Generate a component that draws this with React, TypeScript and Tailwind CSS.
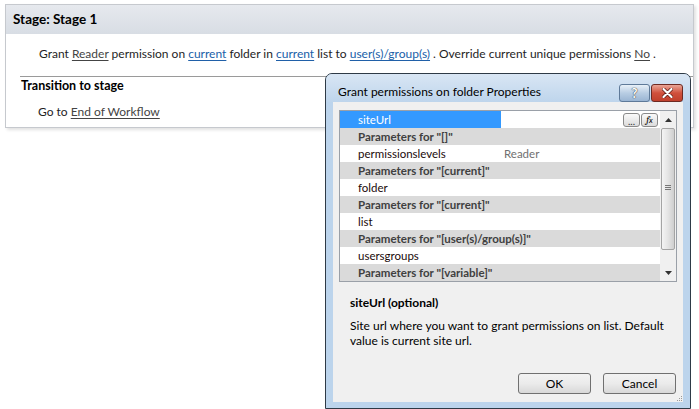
import React from "react";

const ui = { fontFamily: 'Lato, "Open Sans", Arial, sans-serif' };

type Row = { name: string; value?: string; header?: boolean; selected?: boolean };

const rows: Row[] = [
  { name: "siteUrl", selected: true },
  { name: 'Parameters for "[]"', header: true },
  { name: "permissionslevels", value: "Reader" },
  { name: 'Parameters for "[current]"', header: true },
  { name: "folder" },
  { name: 'Parameters for "[current]"', header: true },
  { name: "list" },
  { name: 'Parameters for "[user(s)/group(s)]"', header: true },
  { name: "usersgroups" },
  { name: 'Parameters for "[variable]"', header: true },
];

function StagePanel() {
  return (
    <div className="ml-[5px] mt-[4px] h-[124px] w-[689px] border border-[#c6c9ce] bg-white shadow-[2px_2px_3px_rgba(0,0,0,0.12)]">
      <div className="flex h-[29px] items-center bg-gradient-to-b from-[#e6e9ee] to-[#d8dde4] pl-[7px] text-[13.5px] font-bold text-black">
        Stage: Stage 1
      </div>
      <div className="whitespace-nowrap pl-[33px] pt-[11px] text-[12px] leading-[18px] text-[#1e1e1e]">
        Grant <span className="text-[#444] underline underline-offset-2">Reader</span> permission on{" "}
        <span className="text-[#2060a8] underline underline-offset-2">current</span> folder in{" "}
        <span className="text-[#2060a8] underline underline-offset-2">current</span> list to{" "}
        <span className="text-[#2060a8] underline underline-offset-2">user(s)/group(s)</span> . Override current unique
        permissions <span className="text-[#444] underline underline-offset-2">No</span> .
      </div>
      <div className="ml-[14px] mt-[13px] border-t border-[#9a9a9a] pl-[1px] pt-[1px] text-[12.5px] font-bold leading-[16px] text-black">
        Transition to stage
      </div>
      <div className="pl-[32px] pt-[9px] text-[12px] leading-[18px] text-[#1e1e1e]">
        Go to <span className="text-[#444] underline underline-offset-2">End of Workflow</span>
      </div>
    </div>
  );
}

function Arrow({ up }: { up?: boolean }) {
  return (
    <div className="flex h-[17px] w-[15px] items-center justify-center">
      <svg width="7" height="4" viewBox="0 0 7 4">
        {up ? <path d="M0 4 L3.5 0 L7 4 Z" fill="#333" /> : <path d="M0 0 L7 0 L3.5 4 Z" fill="#333" />}
      </svg>
    </div>
  );
}

function Grid() {
  return (
    <div className="ml-[6px] mt-[8px] flex h-[172px] w-[338px] border border-[#9aa0a8] bg-white">
      <div className="flex w-[320px] flex-col">
        {rows.map((r, i) =>
          r.header ? (
            <div
              key={i}
              className="flex h-[17px] items-center whitespace-nowrap bg-[#dadada] pl-[18px] text-[11.5px] font-bold text-[#404040]"
            >
              {r.name}
            </div>
          ) : (
            <div key={i} className="flex h-[17px] items-center bg-white text-[11.5px] text-[#1a0a0a]">
              <div
                className={`flex h-full w-[161px] items-center pl-[18px] ${r.selected ? "bg-[#3399ff] text-white" : ""}`}
              >
                {r.name}
              </div>
              {r.value && <div className="pl-[3px] text-[#707070]">{r.value}</div>}
              {r.selected && (
                <div className="ml-auto mr-[2px] flex gap-[1px]">
                  <div className="flex h-[14px] w-[17px] items-end justify-center rounded-[3px] border border-[#8a8a8a] bg-gradient-to-b from-[#fafafa] to-[#dcdcdc] text-[10px] leading-[10px] text-[#333]">
                    ...
                  </div>
                  <div className="flex h-[14px] w-[17px] items-center justify-center rounded-[3px] border border-[#8a8a8a] bg-gradient-to-b from-[#fafafa] to-[#dcdcdc] text-[10px] leading-none text-black">
                    <span className="font-serif italic">f</span>
                    <span className="text-[8px] italic">x</span>
                  </div>
                </div>
              )}
            </div>
          )
        )}
      </div>
      <div className="flex w-[16px] flex-col items-center bg-[#f0f0f0]">
        <Arrow up />
        <div className="h-[122px] w-[14px] rounded-[2px] border border-[#a4a4a4] bg-gradient-to-r from-[#f4f4f4] via-[#e4e4e4] to-[#cfcfcf]">
          <div className="mt-[56px] flex flex-col items-center gap-[1px]">
            <div className="h-px w-[6px] bg-[#777]" />
            <div className="h-px w-[6px] bg-[#777]" />
            <div className="h-px w-[6px] bg-[#777]" />
          </div>
        </div>
        <div className="flex-1" />
        <Arrow />
      </div>
    </div>
  );
}

function Dialog() {
  return (
    <div
      className="absolute left-[325px] top-[73px] flex h-[336px] w-[366px] flex-col rounded-t-[7px] border border-[#2e3a46] bg-[#bcd4ec] px-[7px] pb-[6px]"
      style={ui}
    >
      <div className="-mx-[7px] flex h-[28px] items-end rounded-t-[6px] bg-gradient-to-b from-[#d9e6f4] to-[#bed5ec] px-[7px]">
        <div className="pb-[2px] pl-[5px] text-[12px] leading-[16px] text-black">Grant permissions on folder Properties</div>
        <div className="mb-[-1px] ml-auto flex gap-[1px] self-center pt-[9px]">
          <div className="flex h-[18px] w-[31px] items-center justify-center rounded-[3px] border border-[#5f7a99] bg-gradient-to-b from-[#e8f0f8] via-[#b8cde3] to-[#9ab5d3] text-[13px] font-bold leading-none text-white [text-shadow:0_0_1px_#333,0_0_1px_#333]">
            ?
          </div>
          <div className="flex h-[18px] w-[32px] items-center justify-center rounded-[3px] border border-[#6e2a22] bg-gradient-to-b from-[#e8a496] via-[#d0503c] to-[#c0402c]">
            <svg width="11" height="10" viewBox="0 0 11 10">
              <path d="M1.5 1 L9.5 9 M9.5 1 L1.5 9" stroke="#5a1a12" strokeWidth="3.6" strokeLinecap="round" />
              <path d="M1.5 1 L9.5 9 M9.5 1 L1.5 9" stroke="#fff" strokeWidth="2.2" strokeLinecap="round" />
            </svg>
          </div>
        </div>
      </div>
      <div className="relative flex flex-1 flex-col bg-[#f0f0f0]">
        <Grid />
        <div className="pl-[17px] pt-[13px] text-[12px] font-bold leading-[16px] text-black">siteUrl (optional)</div>
        <div className="pl-[17px] pr-[10px] pt-[7px] text-[12px] leading-[15px] text-black">
          Site url where you want to grant permissions on list. Default value is current site url.
        </div>
        <div className="mt-auto flex justify-end gap-[12px] pb-[8px] pr-[7px]">
          <div className="flex h-[21px] w-[73px] items-center justify-center rounded-[3px] border border-[#707070] bg-gradient-to-b from-[#f2f2f2] via-[#ebebeb] to-[#d8d8d8] text-[12px] text-black">
            OK
          </div>
          <div className="flex h-[21px] w-[73px] items-center justify-center rounded-[3px] border border-[#707070] bg-gradient-to-b from-[#f2f2f2] via-[#ebebeb] to-[#d8d8d8] text-[12px] text-black">
            Cancel
          </div>
        </div>
        <div className="absolute bottom-[1px] right-[1px] grid grid-cols-3 gap-[1px]">
          <div className="h-px w-px" />
          <div className="h-px w-px" />
          <div className="h-px w-px bg-[#999]" />
          <div className="h-px w-px" />
          <div className="h-px w-px bg-[#999]" />
          <div className="h-px w-px bg-[#999]" />
          <div className="h-px w-px bg-[#999]" />
          <div className="h-px w-px bg-[#999]" />
          <div className="h-px w-px bg-[#999]" />
        </div>
      </div>
    </div>
  );
}

export default function App() {
  return (
    <div className="relative h-[409px] w-[699px] overflow-hidden bg-white" style={ui}>
      <StagePanel />
      <Dialog />
    </div>
  );
}
